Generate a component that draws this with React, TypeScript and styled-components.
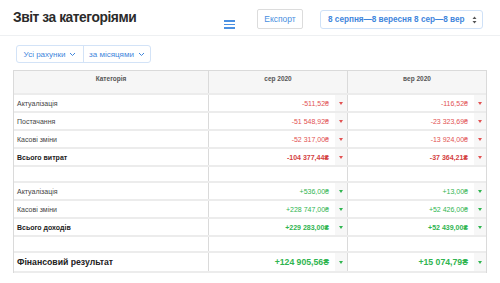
import React from "react";
import styled, { createGlobalStyle } from "styled-components";

const Global = createGlobalStyle`
  html, body { margin: 0; padding: 0; background: #fff; }
  body { font-family: "Liberation Sans", Arial, "DejaVu Sans", sans-serif; color: #222; }
  * { box-sizing: border-box; }
`;

const Page = styled.div`
  width: 500px;
  height: 283px;
  overflow: hidden;
`;

const TopBar = styled.div`
  height: 36px;
  border-bottom: 1px solid #eef0f2;
  display: flex;
  align-items: flex-start;
  padding: 0 13px;
`;

const Title = styled.h1`
  margin: 10px 0 0 0;
  font-size: 13.8px;
  font-weight: 700;
  color: #2b2b2b;
  letter-spacing: -0.45px;
  width: 211px;
`;

const Burger = styled.div`
  margin-top: 20px;
  width: 11px;
  display: flex;
  flex-direction: column;
  gap: 2px;
  & > span { display: block; height: 1.5px; background: #4a90e2; }
`;

const ExportBtn = styled.button`
  margin: 9px 0 0 22px;
  width: 46px;
  height: 20px;
  border: 1px solid #dcdcdc;
  border-radius: 2px;
  background: #fff;
  color: #4a8fe0;
  font-family: inherit;
  font-size: 8.5px;
  padding: 0;
`;

const DateSelect = styled.div`
  margin: 10px 0 0 17px;
  width: 163px;
  height: 19px;
  border: 1px solid #cfe1f7;
  border-radius: 3px;
  display: flex;
  align-items: center;
  padding: 0 5px 0 7px;
  color: #3f86dc;
  font-size: 8.2px;
  font-weight: 700;
  justify-content: space-between;
  white-space: nowrap;
`;

const Filters = styled.div`
  margin: 9px 0 0 16px;
  display: inline-flex;
  height: 18px;
  border: 1px solid #d3e3f7;
  border-radius: 3px;
`;

const FilterBtn = styled.div<{ $w: number }>`
  width: ${(p) => p.$w}px;
  display: flex;
  align-items: center;
  justify-content: center;
  gap: 4px;
  color: #3f86dc;
  font-size: 8px;
  & + & { border-left: 1px solid #d3e3f7; }
`;

const Table = styled.div`
  margin: 7px 0 0 13px;
  width: 474px;
  border: 1px solid #dadada;
  border-bottom: none;
`;

const Row = styled.div<{ $h: number; $head?: boolean }>`
  display: grid;
  grid-template-columns: 194px 139px 139px;
  height: ${(p) => p.$h}px;
  border-bottom: 2px solid #ececec;
  background: ${(p) => (p.$head ? "#f6f6f6" : "#fff")};
`;

const NameCell = styled.div<{ $bold?: boolean; $big?: boolean }>`
  display: flex;
  align-items: center;
  padding-left: 3px;
  font-size: ${(p) => (p.$big ? "8.7px" : "7px")};
  font-weight: ${(p) => (p.$bold ? 700 : 400)};
  color: ${(p) => (p.$bold ? "#222" : "#444")};
`;

const HeadCell = styled.div<{ $line?: boolean }>`
  font-size: 6.5px;
  font-weight: 700;
  color: #555;
  text-align: center;
  padding-top: 4px;
  border-left: ${(p) => (p.$line ? "1px solid #dadada" : "none")};
`;

const AmountCell = styled.div`
  display: flex;
  border-left: 1px solid #dadada;
`;

const Amount = styled.div<{ $pos: boolean; $bold?: boolean; $big?: boolean }>`
  flex: 1;
  display: flex;
  align-items: center;
  justify-content: flex-end;
  padding-right: 6px;
  font-size: ${(p) => (p.$big ? "8.7px" : "7px")};
  font-weight: ${(p) => (p.$bold ? 700 : 400)};
  color: ${(p) => (p.$pos ? "#2fb550" : p.$bold ? "#d43f3f" : "#e25252")};
`;

const Caret = styled.div<{ $pos: boolean }>`
  width: 12px;
  background: #f7f7f7;
  display: flex;
  align-items: center;
  justify-content: center;
  &::after {
    content: "";
    border-left: 2.5px solid transparent;
    border-right: 2.5px solid transparent;
    border-top: 3px solid ${(p) => (p.$pos ? "#2fb550" : "#e25252")};
  }
`;

const Chevron = () => (
  <svg width="7" height="5" viewBox="0 0 7 5" fill="none">
    <path d="M1 1l2.5 2.5L6 1" stroke="#3f86dc" strokeWidth="1" />
  </svg>
);

const UpDown = () => (
  <svg width="5" height="8" viewBox="0 0 5 8">
    <path d="M2.5 0.5L4.5 3H0.5z M2.5 7.5L4.5 5H0.5z" fill="#555" />
  </svg>
);

type R =
  | { kind: "empty" }
  | { kind: "row"; name: string; a: string; b: string; pos: boolean; bold?: boolean; big?: boolean };

const rows: R[] = [
  { kind: "row", name: "Актуалізація", a: "-511,52₴", b: "-116,52₴", pos: false },
  { kind: "row", name: "Постачання", a: "-51 548,92₴", b: "-23 323,69₴", pos: false },
  { kind: "row", name: "Касові зміни", a: "-52 317,00₴", b: "-13 924,00₴", pos: false },
  { kind: "row", name: "Всього витрат", a: "-104 377,44₴", b: "-37 364,21₴", pos: false, bold: true },
  { kind: "empty" },
  { kind: "row", name: "Актуалізація", a: "+536,00₴", b: "+13,00₴", pos: true },
  { kind: "row", name: "Касові зміни", a: "+228 747,00₴", b: "+52 426,00₴", pos: true },
  { kind: "row", name: "Всього доходів", a: "+229 283,00₴", b: "+52 439,00₴", pos: true, bold: true },
  { kind: "empty" },
  { kind: "row", name: "Фінансовий результат", a: "+124 905,56₴", b: "+15 074,79₴", pos: true, bold: true, big: true },
];

export default function App() {
  return (
    <Page>
      <Global />
      <TopBar>
        <Title>Звіт за категоріями</Title>
        <Burger>
          <span />
          <span />
          <span />
        </Burger>
        <ExportBtn>Експорт</ExportBtn>
        <DateSelect>
          <span>8 серпня—8 вересня 8 сер—8 вер</span>
          <UpDown />
        </DateSelect>
      </TopBar>
      <Filters>
        <FilterBtn $w={66}>
          Усі рахунки <Chevron />
        </FilterBtn>
        <FilterBtn $w={67}>
          за місяцями <Chevron />
        </FilterBtn>
      </Filters>
      <Table>
        <Row $h={24} $head>
          <HeadCell>Категорія</HeadCell>
          <HeadCell $line>сер 2020</HeadCell>
          <HeadCell $line>вер 2020</HeadCell>
        </Row>
        {rows.map((r, i) =>
          r.kind === "empty" ? (
            <Row key={i} $h={16}>
              <NameCell />
              <AmountCell />
              <AmountCell />
            </Row>
          ) : (
            <Row key={i} $h={r.big ? 20 : 18}>
              <NameCell $bold={r.bold} $big={r.big}>
                {r.name}
              </NameCell>
              <AmountCell>
                <Amount $pos={r.pos} $bold={r.bold} $big={r.big}>
                  {r.a}
                </Amount>
                <Caret $pos={r.pos} />
              </AmountCell>
              <AmountCell>
                <Amount $pos={r.pos} $bold={r.bold} $big={r.big}>
                  {r.b}
                </Amount>
                <Caret $pos={r.pos} />
              </AmountCell>
            </Row>
          )
        )}
      </Table>
    </Page>
  );
}
